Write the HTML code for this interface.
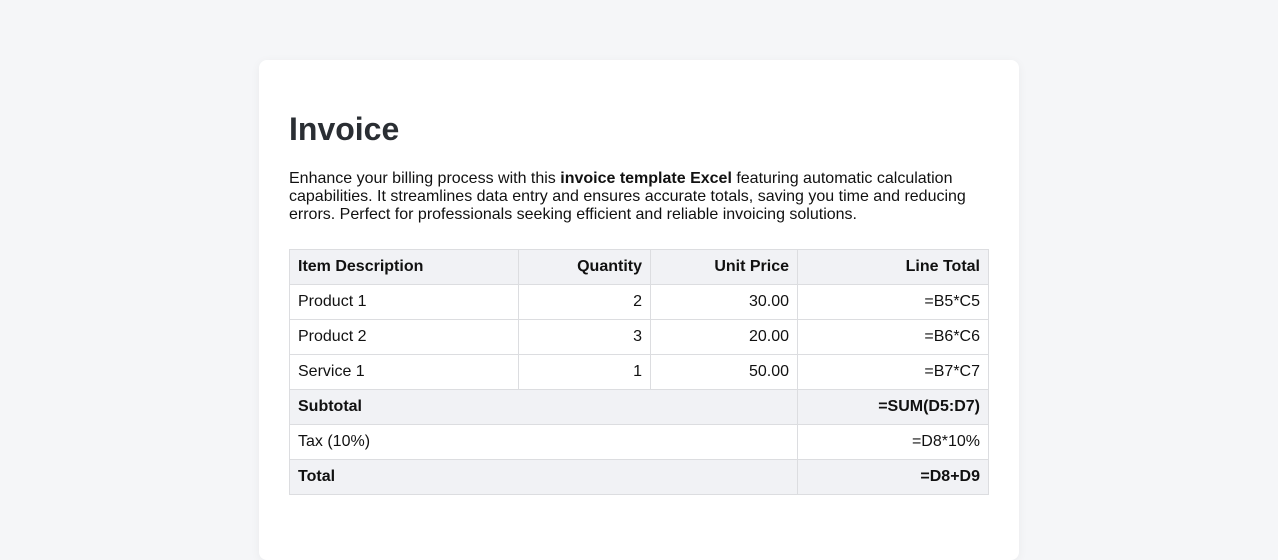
<!DOCTYPE html>
<html><head><style>
body{margin:0;background:#f5f6f8;font-family:"Liberation Sans",Arial,sans-serif;width:1278px;height:501px;overflow:hidden}
.card{position:absolute;left:259px;top:60px;width:700px;height:500px;background:#fff;border-radius:8px;padding:0 30px;box-shadow:0 2px 10px rgba(0,0,0,0.05)}
h1{margin:0;position:absolute;top:51px;left:30px;font-size:32px;color:#2a2e33;font-weight:bold}
p{position:absolute;top:110px;left:30px;width:700px;margin:0;font-size:16px;line-height:18px;color:#111}
table{position:absolute;top:189px;left:30px;width:700px;border-collapse:collapse;font-size:16px;color:#111}
td,th{border:1px solid #dcdde0;height:34px;padding:0 8px;box-sizing:border-box}
th{background:#f1f2f5;text-align:left}
.r{text-align:right}
tr.g td{background:#f1f2f5;font-weight:bold}
</style></head><body>
<div class="card">
<h1>Invoice</h1>
<p>Enhance your billing process with this <b>invoice template Excel</b> featuring automatic calculation capabilities. It streamlines data entry and ensures accurate totals, saving you time and reducing errors. Perfect for professionals seeking efficient and reliable invoicing solutions.</p>
<table>
<tr style="height:35px"><th style="width:229px">Item Description</th><th class="r" style="width:132px">Quantity</th><th class="r" style="width:147px">Unit Price</th><th class="r">Line Total</th></tr>
<tr style="height:35px"><td>Product 1</td><td class="r">2</td><td class="r">30.00</td><td class="r">=B5*C5</td></tr>
<tr style="height:35px"><td>Product 2</td><td class="r">3</td><td class="r">20.00</td><td class="r">=B6*C6</td></tr>
<tr style="height:35px"><td>Service 1</td><td class="r">1</td><td class="r">50.00</td><td class="r">=B7*C7</td></tr>
<tr class="g" style="height:35px"><td colspan="3">Subtotal</td><td class="r">=SUM(D5:D7)</td></tr>
<tr style="height:35px"><td colspan="3">Tax (10%)</td><td class="r">=D8*10%</td></tr>
<tr class="g" style="height:35px"><td colspan="3">Total</td><td class="r">=D8+D9</td></tr>
</table>
</div>
</body></html>
